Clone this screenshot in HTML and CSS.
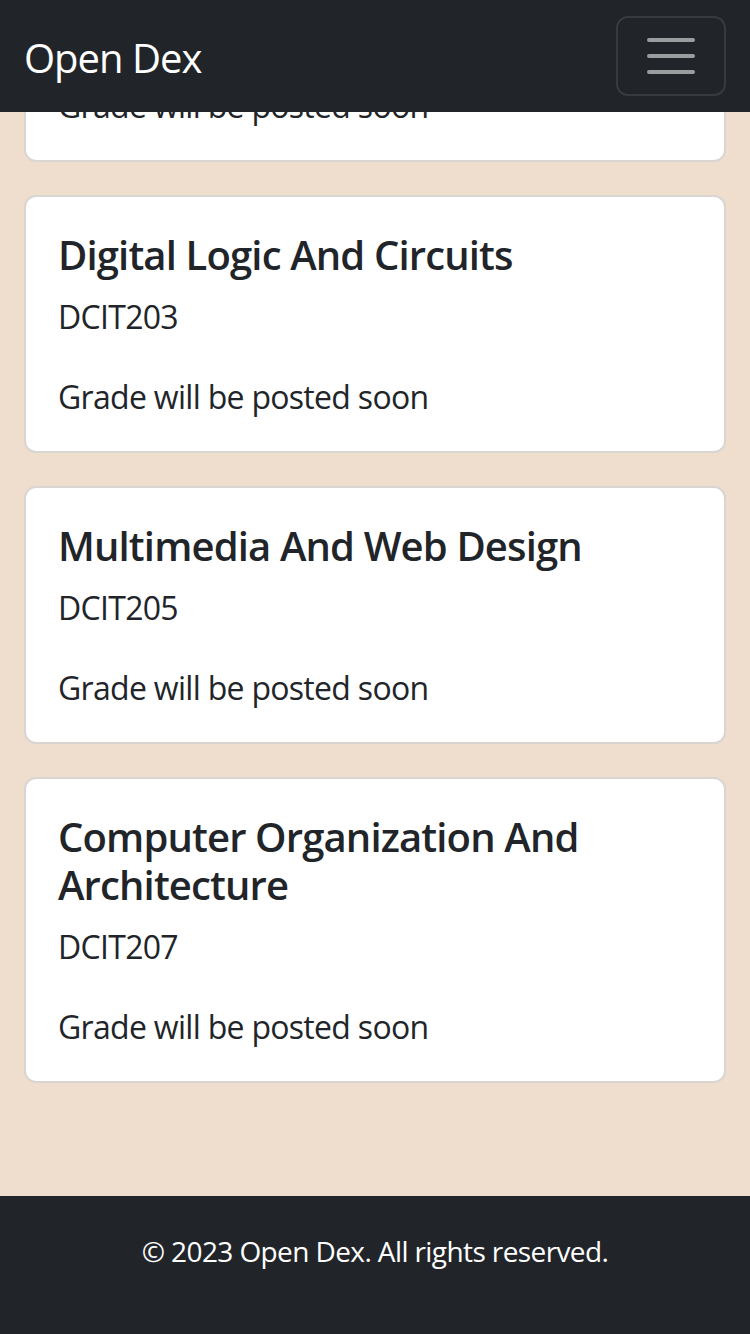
FILE: index.html
```html
<!DOCTYPE html>
<html lang="en">
<head>
<meta charset="utf-8">
<title>Open Dex</title>
<link rel="stylesheet" href="styles.css">
</head>
<body>
<header class="navbar">
  <a class="brand" href="#">Open Dex</a>
  <button class="toggler" type="button" aria-label="Toggle navigation">
    <svg class="toggler-icon" viewBox="0 0 30 30" width="60" height="60" aria-hidden="true">
      <path d="M4 7h22M4 15h22M4 23h22" stroke="rgba(255,255,255,0.55)" stroke-width="2" stroke-linecap="round" fill="none"/>
    </svg>
  </button>
</header>
<main class="content">
  <div class="card-clip">
    <div class="card">
      <p class="card-grade">Grade will be posted soon</p>
    </div>
  </div>
  <div class="card">
    <h5 class="card-title">Digital Logic And Circuits</h5>
    <p class="card-code">DCIT203</p>
    <p class="card-grade">Grade will be posted soon</p>
  </div>
  <div class="card">
    <h5 class="card-title">Multimedia And Web Design</h5>
    <p class="card-code">DCIT205</p>
    <p class="card-grade">Grade will be posted soon</p>
  </div>
  <div class="card">
    <h5 class="card-title">Computer Organization And Architecture</h5>
    <p class="card-code">DCIT207</p>
    <p class="card-grade">Grade will be posted soon</p>
  </div>
</main>
<footer class="footer">
  <p class="footer-text">© 2023 Open Dex. All rights reserved.</p>
</footer>
</body>
</html>
```

FILE: styles.css
```css
* {
  box-sizing: border-box;
}

html, body {
  margin: 0;
  padding: 0;
}

body {
  background: #efdece;
  color: #212529;
  font-family: "Open Sans", "Noto Sans", "Liberation Sans", sans-serif;
  font-size: 32px;
  line-height: 48px;
  letter-spacing: -0.7px;
}

.navbar {
  height: 112px;
  background: #212529;
  display: flex;
  align-items: center;
  justify-content: space-between;
  padding: 0 24px;
}

.brand {
  color: #ffffff;
  text-decoration: none;
  font-size: 40px;
  line-height: 60px;
  font-weight: 400;
  letter-spacing: -1px;
  padding-top: 4px;
}

.toggler {
  width: 110px;
  height: 80px;
  padding: 0;
  margin: 0;
  background: transparent;
  border: 2px solid rgba(255, 255, 255, 0.1);
  border-radius: 12px;
  display: flex;
  align-items: center;
  justify-content: center;
}

.toggler-icon {
  display: block;
}

.content {
  padding: 0 24px 80px;
}

.card-clip {
  height: 50px;
  overflow: hidden;
  display: flex;
  flex-direction: column;
  justify-content: flex-end;
  margin-bottom: 33px;
}

.card-clip .card {
  margin-bottom: 0;
  flex-shrink: 0;
}

.card {
  background: #ffffff;
  border: 2px solid #d8d5d2;
  border-radius: 12px;
  padding: 34px 32px 30px;
  margin-bottom: 33px;
}

.card-title {
  margin: 0 0 14px;
  font-size: 40px;
  line-height: 48px;
  font-weight: 600;
  letter-spacing: -0.85px;
}

.card-code {
  margin: 0 0 32px;
}

.card-grade {
  margin: 0;
}

.footer {
  background: #212529;
  color: #ffffff;
  height: 138px;
  padding-top: 34px;
  text-align: center;
  font-size: 28px;
  line-height: 42px;
  letter-spacing: -0.6px;
}

.footer-text {
  margin: 0;
}
```
